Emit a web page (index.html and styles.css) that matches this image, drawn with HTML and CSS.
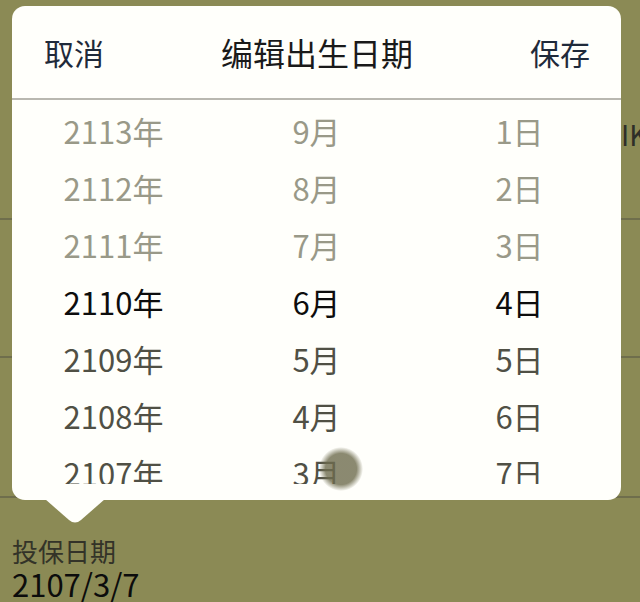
FILE: index.html
```html
<!DOCTYPE html>
<html lang="zh-CN">
<head>
<meta charset="utf-8">
<title>编辑出生日期</title>
<link rel="stylesheet" href="styles.css">
</head>
<body>
<div class="page">
  <div class="bg-row bg-row-first"><span class="bg-text">IKEA 宜家家居</span></div>
  <div class="bg-row bg-row-second"></div>
  <div class="bg-row bg-row-third"></div>
  <div class="field">
    <div class="field-label">投保日期</div>
    <div class="field-value">2107/3/7</div>
  </div>
</div>

<div class="modal">
  <div class="modal-header">
    <span class="btn">取消</span>
    <span class="title">编辑出生日期</span>
    <span class="btn">保存</span>
  </div>
  <div class="picker">
    <div class="col">
      <div class="item far">2113年</div>
      <div class="item far">2112年</div>
      <div class="item far">2111年</div>
      <div class="item sel">2110年</div>
      <div class="item near">2109年</div>
      <div class="item near">2108年</div>
      <div class="item near">2107年</div>
    </div>
    <div class="col">
      <div class="item far">9月</div>
      <div class="item far">8月</div>
      <div class="item far">7月</div>
      <div class="item sel">6月</div>
      <div class="item near">5月</div>
      <div class="item near">4月</div>
      <div class="item near">3月</div>
    </div>
    <div class="col">
      <div class="item far">1日</div>
      <div class="item far">2日</div>
      <div class="item far">3日</div>
      <div class="item sel">4日</div>
      <div class="item near">5日</div>
      <div class="item near">6日</div>
      <div class="item near">7日</div>
    </div>
  </div>
</div>
<svg class="pointer" width="60" height="26" viewBox="0 0 60 26"><path d="M0 0 L24 21 Q30 26 36 21 L60 0 Z" fill="#fffffb"/></svg>
<div class="touch"></div>
</body>
</html>
```

FILE: styles.css
```css
html, body {
  margin: 0;
  padding: 0;
}
body {
  width: 640px;
  height: 602px;
  overflow: hidden;
  background: #8b8a55;
  font-family: "Noto Sans CJK SC", "Noto Sans", sans-serif;
  position: relative;
}
.page {
  display: flex;
  flex-direction: column;
}
.bg-row {
  border-bottom: 2px solid #6f6e4c;
  box-sizing: border-box;
}
.bg-row-first {
  height: 220px;
  padding: 114px 0 0 621px;
  white-space: nowrap;
}
.bg-text {
  font-size: 28px;
  color: #2e2e28;
  line-height: 40px;
}
.bg-row-second {
  height: 138px;
}
.bg-row-third {
  height: 140px;
}
.field {
  padding: 37px 0 0 12px;
}
.field-label {
  font-size: 26px;
  line-height: 32px;
  color: #333328;
}
.field-value {
  font-size: 31px;
  line-height: 34px;
  color: #0c0c0c;
}
.modal {
  position: absolute;
  left: 12px;
  top: 6px;
  width: 609px;
  height: 494px;
  background: #fffffb;
  border-radius: 13px;
  display: flex;
  flex-direction: column;
  overflow: hidden;
}
.modal-header {
  height: 92px;
  flex: none;
  display: flex;
  align-items: center;
  justify-content: space-between;
  padding: 0 31px 0 32px;
  border-bottom: 2px solid #b9b8b0;
}
.btn {
  font-size: 30px;
  color: #1f2a3a;
}
.title {
  font-size: 32px;
  color: #1a1a1a;
}
.picker {
  height: 382px;
  overflow: hidden;
  display: grid;
  grid-template-columns: 1fr 1fr 1fr;
  padding-top: 2px;
}
.col {
  display: flex;
  flex-direction: column;
  align-items: center;
}
.item {
  height: 57px;
  line-height: 57px;
  font-size: 31px;
  flex: none;
}
.far {
  color: #999988;
}
.sel {
  color: #0d0d0d;
}
.near {
  color: #505045;
}
.pointer {
  position: absolute;
  left: 45px;
  top: 499px;
}
.touch {
  position: absolute;
  left: 319px;
  top: 447px;
  width: 44px;
  height: 44px;
  border-radius: 50%;
  background: radial-gradient(circle, rgba(110, 108, 78, 0.8) 50%, rgba(110, 108, 78, 0) 71%);
}
```
